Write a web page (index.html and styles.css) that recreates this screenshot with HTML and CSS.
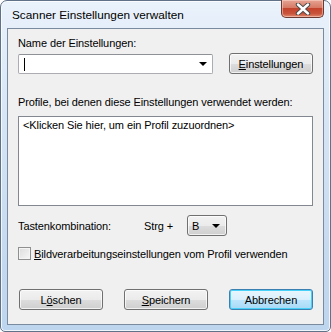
FILE: index.html
```html
<!DOCTYPE html>
<html lang="de">
<head>
  <meta charset="UTF-8">
  <title>Scanner Einstellungen verwalten</title>
  <link rel="stylesheet" href="styles.css">
</head>
<body>
  <div class="window">
    <div class="titlebar">
      <span class="title">Scanner Einstellungen verwalten</span>
      <button class="close" aria-label="Schließen">
        <svg width="16" height="12" viewBox="0 0 16 12">
          <path d="M3 1.5 L13 10.5 M13 1.5 L3 10.5" stroke="#4a4a4a" stroke-width="4.4" stroke-linecap="round"/>
          <path d="M3 1.5 L13 10.5 M13 1.5 L3 10.5" stroke="#fff" stroke-width="2.4" stroke-linecap="round"/>
        </svg>
      </button>
    </div>

    <div class="client">
      <div class="label first">Name der Einstellungen:</div>
      <div class="row">
        <div class="combo">
          <span class="caret"></span>
          <span class="arrow"></span>
        </div>
        <button class="btn"><u>E</u>instellungen</button>
      </div>

      <div class="label second">Profile, bei denen diese Einstellungen verwendet werden:</div>
      <div class="listbox">&lt;Klicken Sie hier, um ein Profil zuzuordnen&gt;</div>

      <div class="keys">
        <span class="keys-label">Tastenkombination:</span>
        <span class="strg">Strg +</span>
        <div class="dropdown">
          <span>B</span>
          <span class="arrow"></span>
        </div>
      </div>

      <label class="check">
        <span class="box"></span>
        <span><u>B</u>ildverarbeitungseinstellungen vom Profil verwenden</span>
      </label>

      <div class="actions">
        <button class="btn">L<u>ö</u>schen</button>
        <button class="btn"><u>S</u>peichern</button>
        <button class="btn default">Abbrechen</button>
      </div>
    </div>
  </div>
</body>
</html>
```

FILE: styles.css
```css
body {
  margin: 0;
  background: #ffffff;
  font-family: "Liberation Sans", Arial, sans-serif;
  font-size: 11px;
  letter-spacing: -0.1px;
  color: #000;
}

.window {
  width: 331px;
  height: 332px;
  box-sizing: border-box;
  border: 1px solid #5f7288;
  border-radius: 7px 7px 5px 5px;
  background: linear-gradient(to bottom, #eaf2fb 0%, #d9e7f6 30%, #c8dbf0 70%, #bdd5ee 100%);
  box-shadow: inset 0 0 0 1px rgba(255, 255, 255, 0.75);
  display: flex;
  flex-direction: column;
  padding: 0 6px 6px 6px;
}

/* Title bar */
.titlebar {
  height: 27px;
  display: flex;
  align-items: flex-start;
  justify-content: space-between;
}

.title {
  font-size: 11.8px;
  letter-spacing: 0;
  margin: 7px 0 0 5px;
  color: #000;
}

.close {
  width: 43px;
  height: 18px;
  margin: -1px 0 0 0;
  padding: 0;
  border: 1px solid #6b3a33;
  border-top: none;
  border-radius: 0 0 5px 5px;
  background: linear-gradient(to bottom, #e6a494 0%, #d77a66 45%, #c4432c 50%, #c9543c 80%, #e08a6e 100%);
  box-shadow: inset 0 0 0 1px rgba(255, 220, 210, 0.5);
  display: flex;
  align-items: center;
  justify-content: center;
}

/* Client area */
.client {
  flex: 1;
  background: #f0f0f0;
  border: 1px solid #7a8ba0;
  display: flex;
  flex-direction: column;
  padding: 0 10px;
}

.label {
  line-height: 15px;
  height: 15px;
}

.label.first {
  margin-top: 7px;
}

.label.second {
  margin-top: 21px;
}

.row {
  margin-top: 3px;
  display: flex;
  justify-content: space-between;
  align-items: flex-start;
}

.combo {
  width: 195px;
  height: 20px;
  box-sizing: border-box;
  border: 1px solid #abadb3;
  border-top-color: #8e9196;
  border-radius: 2px;
  background: #fff;
  display: flex;
  align-items: center;
  justify-content: space-between;
  padding: 0 5px 0 5px;
}

.caret {
  width: 1px;
  height: 13px;
  background: #000;
}

.arrow {
  width: 0;
  height: 0;
  border-left: 4px solid transparent;
  border-right: 4px solid transparent;
  border-top: 4px solid #000;
}

.btn {
  width: 84px;
  height: 21px;
  padding: 0;
  font-family: inherit;
  font-size: 11px;
  letter-spacing: -0.1px;
  color: #000;
  border: 1px solid #707070;
  border-radius: 3px;
  background: linear-gradient(to bottom, #f2f2f2 0%, #ebebeb 50%, #dddddd 51%, #cfcfcf 100%);
  box-shadow: inset 0 0 0 1px rgba(255, 255, 255, 0.7);
}

.row .btn {
  margin-top: -1px;
}

.btn.default {
  border-color: #3c7fb1;
  background: linear-gradient(to bottom, #eaf6fd 0%, #d9f0fc 50%, #bee6fd 51%, #a7d9f5 100%);
  box-shadow: inset 0 0 0 1px #48d1f8;
}

.listbox {
  margin-top: 6px;
  height: 90px;
  box-sizing: border-box;
  border: 1px solid #828790;
  background: #fff;
  padding: 1px 4px;
  line-height: 15px;
}

.keys {
  margin-top: 9px;
  height: 21px;
  display: flex;
  align-items: center;
}

.keys-label {
  width: 126px;
}

.strg {
  width: 43px;
}

.dropdown {
  width: 40px;
  height: 21px;
  box-sizing: border-box;
  border: 1px solid #707070;
  border-radius: 3px;
  background: linear-gradient(to bottom, #f2f2f2 0%, #ebebeb 50%, #dddddd 51%, #cfcfcf 100%);
  box-shadow: inset 0 0 0 1px rgba(255, 255, 255, 0.7);
  display: flex;
  align-items: center;
  justify-content: space-between;
  padding: 0 6px 0 4px;
}

.check {
  margin-top: 9px;
  height: 17px;
  display: flex;
  align-items: center;
  gap: 3px;
}

.box {
  width: 13px;
  height: 13px;
  box-sizing: border-box;
  border: 1px solid #8f8f8f;
  background: linear-gradient(135deg, #dcdcdc 0%, #f6f6f6 100%);
  box-shadow: inset 0 0 0 1px #f4f4f4;
}

.actions {
  margin-top: 27px;
  display: flex;
  justify-content: space-between;
  padding-left: 1px;
}
```
